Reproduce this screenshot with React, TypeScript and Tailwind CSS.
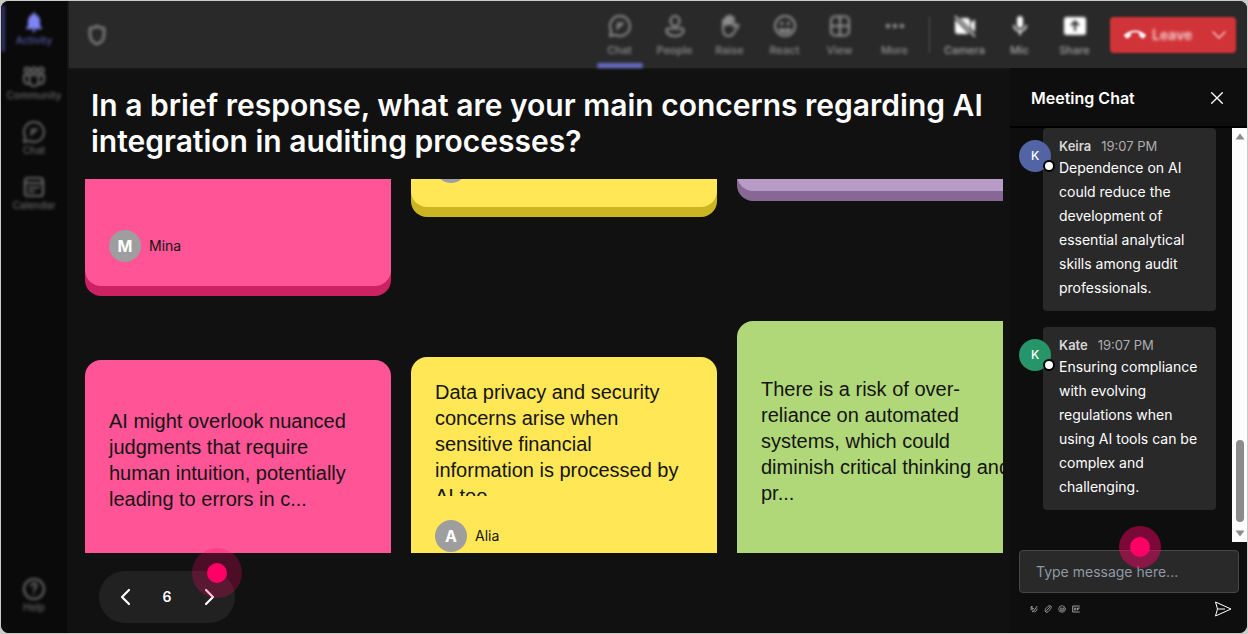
import React from "react";
import { MdCallEnd, MdMic, MdNotifications } from "react-icons/md";

type IconProps = { className?: string };

function Stroke({ className = "size-6", width = 1.8, children }: { className?: string; width?: number; children: React.ReactNode }) {
  return (
    <svg
      viewBox="0 0 24 24"
      className={className}
      fill="none"
      stroke="currentColor"
      strokeWidth={width}
      strokeLinecap="round"
      strokeLinejoin="round"
      aria-hidden="true"
    >
      {children}
    </svg>
  );
}

const ChatIcon = ({ className }: IconProps) => (
  <Stroke className={className} width={2}>
    <path d="M12 2a10 10 0 1 1-4.800 18.800L2 22l1.200-5.200A10 10 0 0 1 12 2z" />
    <path d="M9.500 9.500h5.500M9.500 12h3.500M9.500 12v3" />
  </Stroke>
);

const PeopleIcon = ({ className }: IconProps) => (
  <Stroke className={className} width={2.2}>
    <ellipse cx="12" cy="7" rx="4.500" ry="5" />
    <path d="M5.500 14.500h13c1.200 0 2 .8 2 2 0 3.500-4 5.500-8.500 5.500s-8.500-2-8.500-5.500c0-1.200.8-2 2-2z" />
  </Stroke>
);

const RaiseIcon = ({ className }: IconProps) => (
  <Stroke className={className} width={2}>
    <path d="M5 12V7a1.300 1.300 0 0 1 2.700 0V4a1.300 1.300 0 0 1 2.700 0V2.800a1.300 1.300 0 0 1 2.700 0V4.500a1.300 1.300 0 0 1 2.700 0V13l2-2c1-.8 3.200-.2 2.600 1.200L16 18.500c-1 2-2.500 3.500-5.200 3.500C7 22 5 19 5 15z" />
    <path d="M7.700 5v6M10.400 4v6M13.100 4v6" strokeWidth="2.800" />
  </Stroke>
);

const ReactIcon = ({ className }: IconProps) => (
  <Stroke className={className} width={2}>
    <circle cx="12" cy="12" r="10" />
    <path d="M6.500 15.500c2 4 9 4 11 0z" />
    <circle cx="8.700" cy="9.500" r=".8" fill="currentColor" />
    <circle cx="15.300" cy="9.500" r=".8" fill="currentColor" />
  </Stroke>
);

const ViewIcon = ({ className }: IconProps) => (
  <Stroke className={className} width={2.2}>
    <rect x="3" y="2.500" width="18" height="19" rx="4" />
    <path d="M12 2.500v19M3 12h18" />
  </Stroke>
);

const MoreIcon = ({ className }: IconProps) => (
  <svg viewBox="0 0 24 24" className={className} fill="currentColor" aria-hidden="true">
    <circle cx="5" cy="12" r="2.300" />
    <circle cx="12" cy="12" r="2.300" />
    <circle cx="19" cy="12" r="2.300" />
  </svg>
);

const CameraOffIcon = ({ className }: IconProps) => (
  <svg viewBox="0 0 24 24" className={className} fill="currentColor" aria-hidden="true">
    <path d="M2 5.500 16 20H5a3 3 0 0 1-3-3zM7 4h7a3 3 0 0 1 3 3v7.500zM18 8.500 22 5.500v12.500l-4-3.500z" />
    <path d="M2 2l20 20.500" stroke="currentColor" strokeWidth="1.500" />
  </svg>
);

const ShareIcon = ({ className }: IconProps) => (
  <svg viewBox="0 0 24 24" className={className} aria-hidden="true">
    <rect x="1" y="3" width="22" height="18" rx="2.500" fill="currentColor" />
    <path d="M12 17V8M8 11.500 12 7.500l4 4" fill="none" stroke="#292929" strokeWidth="2" />
  </svg>
);

const ShieldIcon = ({ className }: IconProps) => (
  <Stroke className={className} width={2.8}>
    <path d="M12 3c2.300 1.700 4.600 2.200 7 2.200v6.800c0 4.600-3 7.600-7 9-4-1.400-7-4.400-7-9V5.200c2.400 0 4.700-.5 7-2.200z" />
  </Stroke>
);

const CommunityIcon = ({ className }: IconProps) => (
  <Stroke className={className} width={2.2}>
    <circle cx="5" cy="5" r="2.500" />
    <circle cx="12" cy="5" r="2.500" />
    <circle cx="19" cy="5" r="2.500" />
    <path d="M7.500 10h9v6.500a4.500 4.500 0 0 1-9 0zM7.500 10H2v5c0 2.500 2 4 5 4M16.500 10H22v5c0 2.500-2 4-5 4" />
  </Stroke>
);

const CalendarIcon = ({ className }: IconProps) => (
  <Stroke className={className} width={2.2}>
    <rect x="3" y="3" width="18" height="18" rx="3" />
    <path d="M3 8h18M7 12.500h8M7 16.500h5M17 12.500h.1" />
  </Stroke>
);

const HelpIcon = ({ className }: IconProps) => (
  <Stroke className={className} width={2.2}>
    <circle cx="12" cy="12" r="10" />
    <path d="M9.500 9a2.500 2.500 0 1 1 4 2c-1 .8-1.500 1.300-1.500 2.500M12 17v.1" />
  </Stroke>
);

function SideItem({ icon: Icon, label, active }: { icon: React.ComponentType<IconProps>; label: string; active?: boolean }) {
  return (
    <button type="button" className={`relative flex h-[55px] w-full flex-col items-center pt-[9px] blur-[1px] ${active ? "text-[#7f85f5]" : "text-[#666666]"}`}>
      {active && <span className="absolute top-1 left-0 h-[47px] w-1 rounded bg-[#34366b]" />}
      <Icon className="size-6" />
      <span className={`text-[10px] leading-3 font-medium ${active ? "text-[#5558ab]" : ""}`}>{label}</span>
    </button>
  );
}

function HeaderItem({ icon: Icon, label, active, bright }: { icon: React.ComponentType<IconProps>; label: string; active?: boolean; bright?: boolean }) {
  return (
    <button type="button" className="relative flex h-full w-[55px] shrink-0 flex-col items-center pt-[13px] text-[#8f8f8f] blur-[1px]">
      <Icon className={bright ? "size-6 text-white" : "size-6"} />
      <span className={`mt-1 text-[11px] leading-4 font-medium ${bright ? "text-[#a6a6a6]" : ""}`}>{label}</span>
      {active && <span className="absolute bottom-0 left-[5px] h-[5px] w-[46px] rounded-sm bg-[#666bc4]" />}
    </button>
  );
}

function Author({ name }: { name: string }) {
  return (
    <div className="flex items-center gap-2">
      <span className="flex size-8 items-center justify-center rounded-full bg-[#9e9e9e] text-base font-bold text-white">{name[0]}</span>
      <span className="text-sm">{name}</span>
    </div>
  );
}

function Message({ name, color, children }: { name: string; color: string; children: React.ReactNode }) {
  return (
    <article className="flex items-start">
      <div className={`relative z-10 mt-3 -mr-2 flex size-8 shrink-0 items-center justify-center rounded-full text-xs font-medium text-white ${color}`}>
        {name[0]}
        <span className="absolute -right-1 bottom-0 size-3 rounded-full border-2 border-black bg-white" />
      </div>
      <div className="min-w-0 flex-1 rounded-sm bg-[#292929] px-4 pt-2 pb-[11px]">
        <div className="flex gap-[10px] text-[13px] leading-5 text-[#adadad]">
          <span className="font-semibold text-[#d6d6d6]">{name}</span>
          <time>19:07 PM</time>
        </div>
        <p className="text-sm leading-6 text-white">{children}</p>
      </div>
    </article>
  );
}

const noteText = "font-['Liberation_Sans',sans-serif] text-xl leading-[26px]";

export default function App() {
  return (
    <div className="h-screen min-h-[560px] bg-[#c8cbc8] p-px font-[Inter,sans-serif]">
      <div className="flex h-full overflow-hidden rounded-lg bg-[#111111] text-white">
        <nav aria-label="Apps" className="w-[66px] shrink-0 bg-[#0a0a0a]">
          <div className="flex h-full flex-col pb-[10px] blur-[1px]">
            <SideItem icon={MdNotifications} label="Activity" active />
            <SideItem icon={CommunityIcon} label="Community" />
            <SideItem icon={ChatIcon} label="Chat" />
            <SideItem icon={CalendarIcon} label="Calendar" />
            <div className="mt-auto">
              <SideItem icon={HelpIcon} label="Help" />
            </div>
          </div>
        </nav>

        <div className="flex min-w-0 flex-1 flex-col">
          <header className="ml-[2px] h-[67px] shrink-0 bg-[#292929] shadow-[0_0_3px_#292929]">
            <div className="flex h-full items-center pr-[11px] blur-[1px]">
              <ShieldIcon className="ml-4 size-6 text-[#7a7a7a] blur-[1px]" />
              <div className="ml-auto flex h-full items-center">
                <HeaderItem icon={ChatIcon} label="Chat" active />
                <HeaderItem icon={PeopleIcon} label="People" />
                <HeaderItem icon={RaiseIcon} label="Raise" />
                <HeaderItem icon={ReactIcon} label="React" />
                <HeaderItem icon={ViewIcon} label="View" />
                <HeaderItem icon={MoreIcon} label="More" />
                <span className="mx-[7px] h-9 w-px bg-[#505050]" />
                <HeaderItem icon={CameraOffIcon} label="Camera" bright />
                <HeaderItem icon={MdMic} label="Mic" bright />
                <HeaderItem icon={ShareIcon} label="Share" bright />
              </div>
              <button type="button" className="ml-2 flex h-9 w-[126px] shrink-0 items-center rounded bg-[#d13438] pr-2 pl-[14px] text-sm font-semibold text-[#f5d0d1]">
                <MdCallEnd className="size-[22px] text-white" />
                <span className="ml-[6px] blur-[1px]">Leave</span>
                <Stroke className="ml-auto size-[18px]">
                  <path d="m4 8 8 8 8-8" />
                </Stroke>
              </button>
            </div>
          </header>

          <div className="flex min-h-0 flex-1">
            <main className="flex min-w-0 flex-1 flex-col pt-[19px] pr-[7px] pl-[18px]">
              <h1 className="pl-[6px] text-[30px] leading-9 font-semibold">
                In a brief response, what are your main concerns regarding AI integration in auditing processes?
              </h1>

              <section aria-label="Responses" className="mt-5 min-h-0 flex-1 overflow-hidden text-[#141414]">
                <div className="-mt-[120px] flex items-start gap-5">
                  <div className="w-[306px] shrink-0">
                    <article className="flex h-[227px] flex-col justify-end rounded-2xl bg-[#ff5495] p-6 shadow-[0_10px_0_#cc2262]">
                      <Author name="Mina" />
                    </article>
                    <article className="mt-[74px] h-[227px] rounded-2xl bg-[#ff5495] px-6 pt-12">
                      <p className={noteText}>AI might overlook nuanced judgments that require human intuition, potentially leading to errors in c...</p>
                    </article>
                  </div>
                  <div className="w-[306px] shrink-0">
                    <article className="flex h-[148px] flex-col justify-end rounded-2xl bg-[#ffe755] p-6 shadow-[0_10px_0_#ccb522]">
                      <span className="size-8 rounded-full bg-[#9e9e9e]" />
                    </article>
                    <article className="mt-[150px] rounded-2xl bg-[#ffe755] px-6 pt-[22px] pb-6">
                      <p className={`mb-6 h-[117px] overflow-hidden ${noteText}`}>
                        Data privacy and security concerns arise when sensitive financial information is processed by AI too...
                      </p>
                      <Author name="Alia" />
                    </article>
                  </div>
                  <div className="w-[306px] shrink-0">
                    <article className="h-[132px] rounded-2xl bg-[#b99bc7] shadow-[0_10px_0_#876894]" />
                    <article className="mt-[130px] h-[260px] rounded-2xl bg-[#b0d878] px-6 pt-[55px]">
                      <p className={noteText}>There is a risk of over-reliance on automated systems, which could diminish critical thinking and pr...</p>
                    </article>
                  </div>
                </div>
              </section>

              <div className="mt-[18px] mb-[10px] ml-[14px] flex h-[52px] w-[136px] shrink-0 items-center justify-between rounded-full bg-[#212121] px-[14px]">
                <button type="button" aria-label="Previous" className="p-0">
                  <Stroke className="size-6" width={2.2}>
                    <path d="m16 5-7 7 7 7" />
                  </Stroke>
                </button>
                <span className="text-sm font-semibold">6</span>
                <button type="button" aria-label="Next" className="relative p-0">
                  <Stroke className="size-6" width={2.2}>
                    <path d="m9 5 7 7-7 7" />
                  </Stroke>
                  <span className="absolute -top-[37px] -left-[5px] flex size-[50px] items-center justify-center rounded-full bg-[#ff0066]/25">
                    <span className="size-5 rounded-full bg-[#ff0066]" />
                  </span>
                </button>
              </div>
            </main>

            <aside aria-label="Meeting chat" className="flex w-[237px] shrink-0 flex-col bg-[#0e0e0e]">
              <div className="flex h-[60px] shrink-0 items-center justify-between border-b-2 border-black pt-[2px] pr-[22px] pl-[21px]">
                <h2 className="text-base font-semibold">Meeting Chat</h2>
                <button type="button" aria-label="Close" className="p-0">
                  <Stroke className="size-4" width={2}>
                    <path d="m4 4 16 16M20 4 4 20" />
                  </Stroke>
                </button>
              </div>

              <div className="flex min-h-0 flex-1">
                <div className="flex min-w-0 flex-1 flex-col gap-4 overflow-hidden pr-4 pl-[9px]">
                  <Message name="Keira" color="bg-[#5264a3]">
                    Dependence on AI could reduce the development of essential analytical skills among audit professionals.
                  </Message>
                  <Message name="Kate" color="bg-[#26956a]">
                    Ensuring compliance with evolving regulations when using AI tools can be complex and challenging.
                  </Message>
                </div>
                <div aria-hidden="true" className="flex w-[15px] shrink-0 flex-col items-center bg-[#fcfcfc] py-[5px]">
                  <svg viewBox="0 0 10 7" className="h-[7px] w-[10px]" fill="#8b8b8b">
                    <path d="M5 0.500 9.500 6.500h-9z" />
                  </svg>
                  <span className="mt-auto mb-2 h-[82px] w-2 rounded-full bg-[#8b8b8b]" />
                  <svg viewBox="0 0 10 7" className="h-[7px] w-[10px]" fill="#8b8b8b">
                    <path d="M5 6.500 9.500 0.500h-9z" />
                  </svg>
                </div>
              </div>

              <form className="pt-2 pr-2 pb-4 pl-[9px]" onSubmit={(e) => e.preventDefault()}>
                <div className="relative">
                  <input
                    type="text"
                    aria-label="Message"
                    placeholder="Type message here..."
                    className="block h-[43px] w-full rounded border border-[#474747] bg-[#292929] px-4 text-sm text-white outline-none placeholder:text-[#8f98a5]"
                  />
                  <span className="pointer-events-none absolute -top-6 left-[100px] flex size-[42px] items-center justify-center rounded-full bg-[#ff0066]/45">
                    <span className="size-5 rounded-full bg-[#ff0066]" />
                  </span>
                </div>
                <div className="mt-2 flex h-4 items-center gap-1 pr-[7px] pl-[10px] text-[#b5b5b5]">
                  <button type="button" aria-label="Format" className="p-px">
                    <Stroke className="size-2" width={2.5}>
                      <path d="M2 9 6 3v11M2 14c3-3 6-4 9-3M21 4 11 19l-3 2 1-4M14 21c5-2 7-5 7-9" />
                    </Stroke>
                  </button>
                  <button type="button" aria-label="Attach" className="p-px">
                    <Stroke className="size-2" width={2.5}>
                      <path d="m8 16 9-9M5 20c-4-4-1-8 2-11l5-5c3-3 11-2 10 3-1 4-9 14-13 15-2 .500-3-1-4-2z" />
                    </Stroke>
                  </button>
                  <button type="button" aria-label="Emoji" className="p-px">
                    <ReactIcon className="size-2" />
                  </button>
                  <button type="button" aria-label="GIF" className="p-px">
                    <Stroke className="size-2" width={2.5}>
                      <path d="M22 3H2v18h20M7 9v6M11 9v6M16 15V9h6M16 12h4" />
                    </Stroke>
                  </button>
                  <button type="submit" aria-label="Send" className="ml-auto text-white">
                    <svg viewBox="0 0 18 16" className="h-4 w-[18px]" fill="none" stroke="currentColor" strokeLinejoin="round" aria-hidden="true">
                      <path d="M1.500 1 17 8 1.500 15l2-7zM3.500 8H11" />
                    </svg>
                  </button>
                </div>
              </form>
            </aside>
          </div>
        </div>
      </div>
    </div>
  );
}
